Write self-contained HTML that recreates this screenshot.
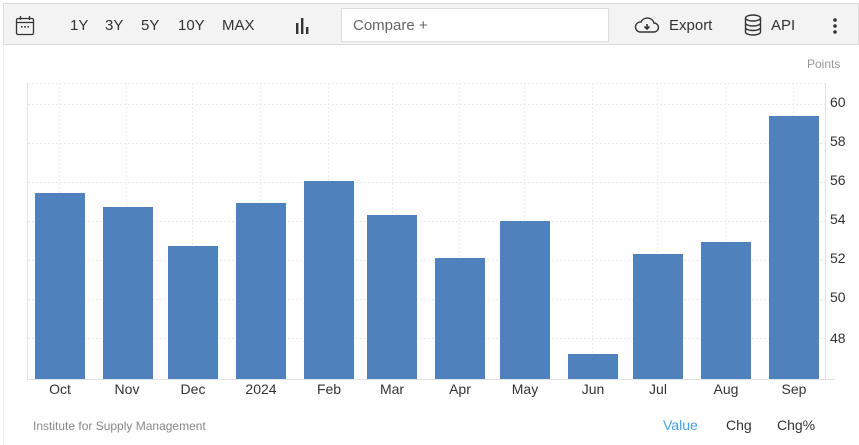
<!DOCTYPE html>
<html><head><meta charset="utf-8"><style>
*{margin:0;padding:0;box-sizing:border-box}
body{width:859px;height:445px;background:#fff;font-family:"Liberation Sans",Arial,sans-serif;position:relative;overflow:hidden}
.tb{position:absolute;left:3px;top:3px;width:856px;height:42px;background:#f3f3f3;border:1px solid #dcdcdc}
.t{position:absolute;top:17px;font-size:15px;color:#333}
.cmp{position:absolute;left:341px;top:8px;width:268px;height:34px;background:#fff;border:1px solid #ddd;font-size:15px;color:#666;padding:8px 11px}
.side{position:absolute;left:3px;top:45px;width:1px;height:400px;background:#eee}
</style></head><body>
<div class="tb"></div>
<div class="side"></div>
<svg style="position:absolute;left:15px;top:15px" width="20" height="22" viewBox="0 0 20 22"><rect x="1.5" y="3.5" width="17" height="16" rx="1.5" fill="none" stroke="#333" stroke-width="1.3"/><line x1="1.5" y1="7.5" x2="18.5" y2="7.5" stroke="#333" stroke-width="1.3"/><line x1="5.5" y1="1" x2="5.5" y2="5" stroke="#333" stroke-width="1.3"/><line x1="14.5" y1="1" x2="14.5" y2="5" stroke="#333" stroke-width="1.3"/><rect x="6" y="11" width="1.6" height="1.6" fill="#333"/><rect x="9.2" y="11" width="1.6" height="1.6" fill="#333"/><rect x="12.4" y="11" width="1.6" height="1.6" fill="#333"/></svg>
<div class="t" style="left:70px">1Y</div>
<div class="t" style="left:105px">3Y</div>
<div class="t" style="left:141px">5Y</div>
<div class="t" style="left:178px">10Y</div>
<div class="t" style="left:222px">MAX</div>
<svg style="position:absolute;left:295px;top:18px" width="16" height="16"><rect x="1" y="5" width="2.4" height="11" fill="#333"/><rect x="6" y="0" width="2.4" height="16" fill="#333"/><rect x="11" y="9" width="2.4" height="7" fill="#333"/></svg>
<div class="cmp">Compare +</div>
<svg style="position:absolute;left:634px;top:16px" width="26" height="18" viewBox="0 0 26 18"><path d="M6 16 H20 A4.5 4.5 0 0 0 20 7 A7 7 0 0 0 7 6 A5 5 0 0 0 6 16 Z" fill="none" stroke="#333" stroke-width="1.4"/><path d="M13 8 V13 M10.5 10.5 L13 13 L15.5 10.5" stroke="#333" stroke-width="1.6" fill="none"/></svg>
<div class="t" style="left:669px">Export</div>
<svg style="position:absolute;left:744px;top:14px" width="18" height="22" viewBox="0 0 18 22"><ellipse cx="9" cy="4" rx="7.5" ry="3" fill="none" stroke="#333" stroke-width="1.4"/><path d="M1.5 4 V18 A7.5 3 0 0 0 16.5 18 V4 M1.5 9 A7.5 3 0 0 0 16.5 9 M1.5 13.5 A7.5 3 0 0 0 16.5 13.5" fill="none" stroke="#333" stroke-width="1.4"/></svg>
<div class="t" style="left:771px">API</div>
<svg style="position:absolute;left:832px;top:17px" width="6" height="18"><circle cx="3" cy="3" r="1.8" fill="#333"/><circle cx="3" cy="9" r="1.8" fill="#333"/><circle cx="3" cy="15" r="1.8" fill="#333"/></svg>

<svg style="position:absolute;left:0;top:0" width="859" height="445">
<g stroke="#ebebeb" stroke-width="1" stroke-dasharray="2,2">
<line x1="28" y1="83.5" x2="825" y2="83.5"/>
<line x1="28" y1="104.5" x2="825" y2="104.5"/>
<line x1="28" y1="143.5" x2="825" y2="143.5"/>
<line x1="28" y1="182.5" x2="825" y2="182.5"/>
<line x1="28" y1="221.5" x2="825" y2="221.5"/>
<line x1="28" y1="260.5" x2="825" y2="260.5"/>
<line x1="28" y1="299.5" x2="825" y2="299.5"/>
<line x1="28" y1="338.5" x2="825" y2="338.5"/>
<line x1="59.5" y1="83" x2="59.5" y2="378"/>
<line x1="126.5" y1="83" x2="126.5" y2="378"/>
<line x1="192.5" y1="83" x2="192.5" y2="378"/>
<line x1="260.5" y1="83" x2="260.5" y2="378"/>
<line x1="328.5" y1="83" x2="328.5" y2="378"/>
<line x1="392.5" y1="83" x2="392.5" y2="378"/>
<line x1="459.5" y1="83" x2="459.5" y2="378"/>
<line x1="524.5" y1="83" x2="524.5" y2="378"/>
<line x1="592.5" y1="83" x2="592.5" y2="378"/>
<line x1="657.5" y1="83" x2="657.5" y2="378"/>
<line x1="725.5" y1="83" x2="725.5" y2="378"/>
<line x1="793.5" y1="83" x2="793.5" y2="378"/>
</g>
<line x1="27.5" y1="83" x2="27.5" y2="379" stroke="#e3e3e3"/>
<line x1="825.5" y1="83" x2="825.5" y2="379" stroke="#e3e3e3"/>
<g fill="#4f81bd">
<rect x="35" y="193" width="50" height="186"/>
<rect x="103" y="207" width="50" height="172"/>
<rect x="168" y="246" width="50" height="133"/>
<rect x="236" y="203" width="50" height="176"/>
<rect x="304" y="181" width="50" height="198"/>
<rect x="367" y="215" width="50" height="164"/>
<rect x="435" y="258" width="50" height="121"/>
<rect x="500" y="221" width="50" height="158"/>
<rect x="568" y="354" width="50" height="25"/>
<rect x="633" y="254" width="50" height="125"/>
<rect x="701" y="242" width="50" height="137"/>
<rect x="769" y="116" width="50" height="263"/>
</g>
<line x1="27" y1="379.5" x2="835" y2="379.5" stroke="#e3e3e3"/>
<g font-family="Liberation Sans, Arial, sans-serif" font-size="14" fill="#333" text-anchor="middle">
<text x="60" y="394">Oct</text><text x="127" y="394">Nov</text><text x="193" y="394">Dec</text><text x="261" y="394">2024</text><text x="329" y="394">Feb</text><text x="392" y="394">Mar</text><text x="460" y="394">Apr</text><text x="525" y="394">May</text><text x="593" y="394">Jun</text><text x="658" y="394">Jul</text><text x="726" y="394">Aug</text><text x="794" y="394">Sep</text>
</g>
<g font-family="Liberation Sans, Arial, sans-serif" font-size="14" fill="#333">
<text x="830" y="107">60</text><text x="830" y="146">58</text><text x="830" y="185">56</text><text x="830" y="224">54</text><text x="830" y="263">52</text><text x="830" y="302">50</text><text x="830" y="343">48</text>
</g>
<text x="807" y="68" font-family="Liberation Sans, Arial, sans-serif" font-size="12" fill="#999">Points</text>
<text x="33" y="430" font-family="Liberation Sans, Arial, sans-serif" font-size="12" fill="#888">Institute for Supply Management</text>
<g font-family="Liberation Sans, Arial, sans-serif" font-size="14">
<text x="663" y="430" fill="#4a9fe8">Value</text>
<text x="726" y="430" fill="#333">Chg</text>
<text x="777" y="430" fill="#333">Chg%</text>
</g>
</svg>
</body></html>
